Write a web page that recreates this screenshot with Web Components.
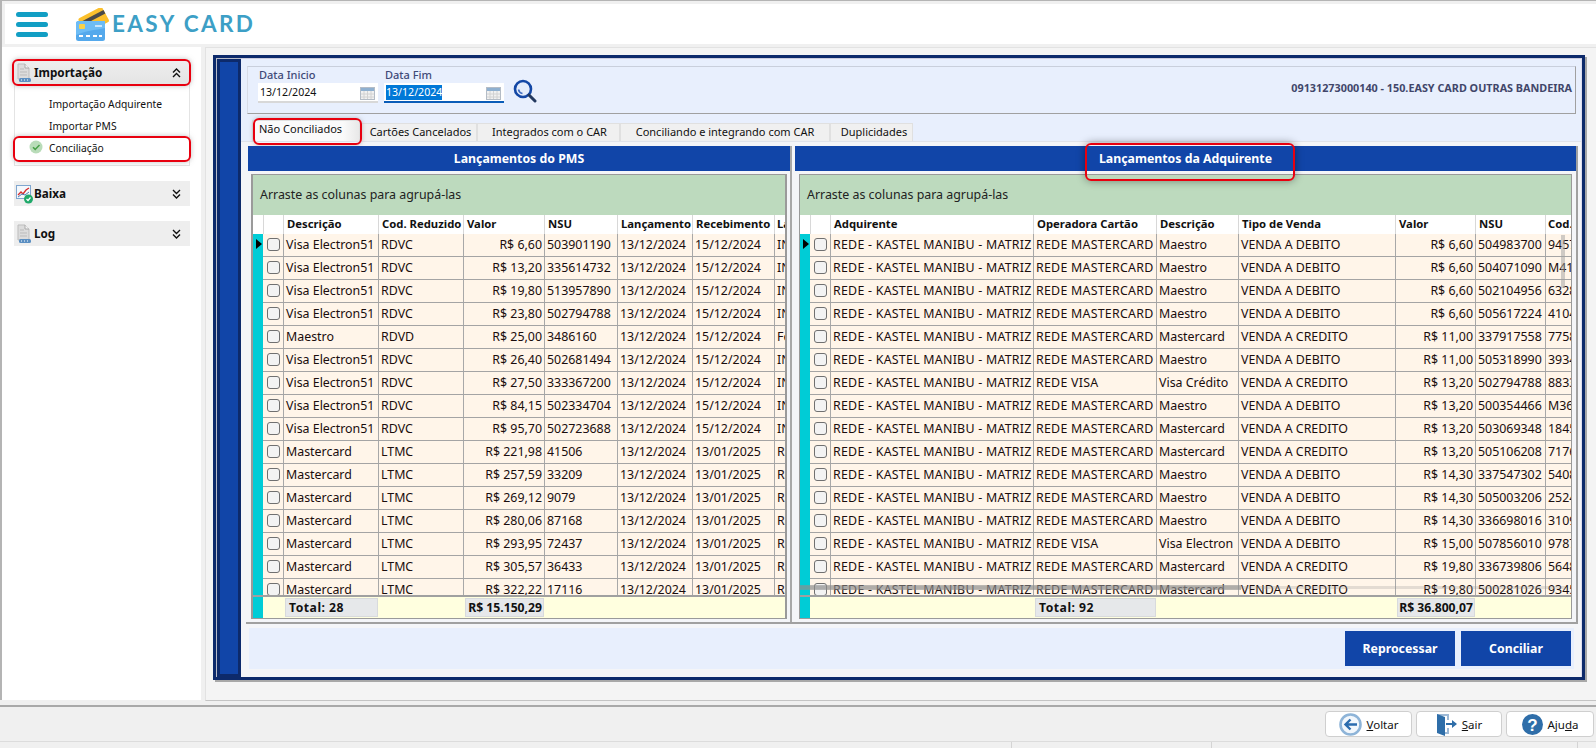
<!DOCTYPE html>
<html lang="pt-BR"><head><meta charset="utf-8"><title>Easy Card</title>
<style>
html,body{margin:0;padding:0;background:#f0f0f0}
body{width:1596px;height:748px;overflow:hidden;font:12px "Noto Sans","Open Sans",sans-serif;color:#111}
</style></head><body>
<app-shell></app-shell>
<script>
const FONT='"Noto Sans","Open Sans",sans-serif';
const ICON={
doc:`<svg width="16" height="20" viewBox="0 0 16 20"><path d="M2 1h7l4 4v11H2z" fill="#dcdcdc" stroke="#bdbdbd"/><path d="M9 1v4h4" fill="#f4f4f4" stroke="#aaa"/><path d="M4 6h4M4 9h7M4 12h7" stroke="#bbb"/><rect x="3" y="15" width="12" height="4" rx="1.5" fill="#5b8fc2"/><path d="M5 17h1M8 17h1M11 17h1" stroke="#fff"/></svg>`,
chart:`<svg width="17" height="20" viewBox="0 0 17 20"><rect x=".5" y="1.500" width="14" height="13" fill="#f4f8fc" stroke="#7fa6cf"/><path d="M2 11l3-3 2 2 3-4 3-2" fill="none" stroke="#d62b2b" stroke-width="1.300"/><path d="M2 13l4-3 3 1 4-3" fill="none" stroke="#4b7fb8"/><circle cx="12.500" cy="15" r="4.500" fill="#1fa96a"/><path d="M10.500 15l1.500 1.500 2.500-3" fill="none" stroke="#fff" stroke-width="1.200"/></svg>`,
up:`<svg width="9" height="10" viewBox="0 0 9 10"><path d="M1 4.500l3.500-3.500 3.500 3.500M1 9l3.500-3.500L8 9" fill="none" stroke="#111" stroke-width="1.400"/></svg>`,
down:`<svg width="9" height="10" viewBox="0 0 9 10"><path d="M1 1l3.500 3.500L8 1M1 5.500L4.500 9 8 5.500" fill="none" stroke="#111" stroke-width="1.400"/></svg>`,
check:`<svg width="14" height="14" viewBox="0 0 14 14"><circle cx="7" cy="7" r="6.500" fill="#b9dcb9"/><path d="M4 7.200l2.200 2.200L10.500 5" fill="none" stroke="#47a047" stroke-width="1.500"/></svg>`,
cal:`<svg width="15" height="14" viewBox="0 0 15 14"><rect x=".5" y="1.500" width="14" height="12" fill="#f1f1f1" stroke="#b4bcc6"/><rect x="1" y="2" width="13" height="3" fill="#8fb0d0"/><path d="M1 8h13M1 11h13M4 5v8M7.500 5v8M11 5v8" stroke="#d2d2d2"/></svg>`,
search:`<svg width="24" height="24" viewBox="0 0 24 24"><circle cx="10" cy="10" r="8" fill="#e4ecfb" stroke="#1347a5" stroke-width="2.600"/><path d="M5.500 10.500a5 5 0 0 0 4 4" fill="none" stroke="#3f6cc0" stroke-width="1.500"/><path d="M16 16l6 6" stroke="#23395f" stroke-width="3" stroke-linecap="round"/></svg>`,
back:`<svg width="23" height="23" viewBox="0 0 23 23"><circle cx="11.500" cy="11.500" r="10" fill="#f2f7fc" stroke="#8eb4d8" stroke-width="2.600"/><path d="M18 11.500H7M11.500 6.500l-5 5 5 5" fill="none" stroke="#2b6cae" stroke-width="2.400"/></svg>`,
exit:`<svg width="21" height="24" viewBox="0 0 21 24"><path d="M1 2h12v6h-2V4H6v16h5v-4h2v6H7z" fill="#9db9d6"/><path d="M1 2l8 3v19l-8-3z" fill="#2f6ea9"/><path d="M10 11h6V8l5 4-5 4v-3h-6z" fill="#2f6ea9"/></svg>`,
help:`<svg width="21" height="21" viewBox="0 0 21 21"><circle cx="10.500" cy="10.500" r="10.500" fill="#2f6ea9"/><text x="10.500" y="16.500" text-anchor="middle" font-family="Liberation Sans" font-weight="700" font-size="17" fill="#fff">?</text></svg>`,
card:`<svg width="34" height="33" viewBox="0 0 34 33"><g transform="rotate(-28 18 12)"><rect x="5" y="4" width="27" height="17" rx="2" fill="#fbc02d"/><rect x="5" y="8" width="27" height="4" fill="#4a4a4a"/></g><rect x="1" y="13" width="29" height="20" rx="2.500" fill="#55a9ec"/><path d="M1 15.500a2.500 2.500 0 0 1 2.500-2.500H30v7C20 22 10 23 1 27z" fill="#6dbcf5"/><rect x="4" y="16" width="6" height="5" rx="1" fill="#f8d24a"/><path d="M20 18h7" stroke="#e8f5ff" stroke-width="1.500"/><path d="M4 28h4M11 28h4M18 28h4M24 28h3" stroke="#fff" stroke-width="2"/></svg>`
};

class TopBar extends HTMLElement{constructor(){super();this.attachShadow({mode:'open'}).innerHTML=`<style>
:host{display:block;height:47px;box-sizing:border-box;border-top:1px solid #b4b4b4;border-left:2px solid #b4b4b4;padding:3px 0 3px 3px;background:#f0f0f0}
.w{height:40px;background:#fff;display:flex;align-items:center;box-sizing:border-box;padding-left:11px}
.b{display:flex;flex-direction:column;gap:5px;width:32px;margin-right:27px}
.b i{display:block;height:5px;border-radius:3px;background:#129ec4}
.t{font:700 22.500px/1 Lato,sans-serif;color:#3d9fc6;letter-spacing:2.400px;margin-left:3px;white-space:pre}
svg{display:block}
</style><div class="w"><div class="b"><i></i><i></i><i></i></div>${ICON.card}<span class="t">EASY CARD</span></div>`}}
customElements.define('top-bar',TopBar);

class MenuGroup extends HTMLElement{constructor(){super();this.attachShadow({mode:'open'})}
connectedCallback(){const open=this.hasAttribute('open'),mark=this.hasAttribute('mark');
this.shadowRoot.innerHTML=`<style>
:host{display:block;font-family:${FONT}}
.h{height:25px;background:#eeeeee;display:flex;align-items:center;padding:0 9px 0 2px;font:700 11.700px ${FONT};color:#111;position:relative;width:176px;box-sizing:border-box}
.h .ic{width:18px;display:flex}
.h span{flex:1;margin-top:-1px}
.h.mark{background:linear-gradient(#eee,#e4e4e4)}
.h.mark::after{content:"";position:absolute;left:-2px;right:-1px;top:-1px;bottom:-1px;border:2px solid #e8000f;border-radius:6px;box-shadow:0 0 5px #8888}
.c{border:1px solid #e4e4e4;border-top:0;width:176px;box-sizing:border-box;height:81px;padding-top:8px}
svg{display:block}
</style><div class="h ${mark?'mark':''}"><div class="ic">${ICON[this.getAttribute('icon')]}</div><span>${this.getAttribute('label')}</span>${open?ICON.up:ICON.down}</div>${open?'<div class="c"><slot></slot></div>':''}`}}
customElements.define('menu-group',MenuGroup);

class MenuItem extends HTMLElement{constructor(){super();this.attachShadow({mode:'open'})}
connectedCallback(){const a=this.hasAttribute('active');
this.shadowRoot.innerHTML=`<style>
:host{display:block;height:22px}
.r{height:22px;display:flex;align-items:center;position:relative;font:10.300px ${FONT};color:#111;padding-left:34px;box-sizing:border-box}
.i{position:absolute;left:14px;top:3px}
.a::after{content:"";position:absolute;left:-2px;right:-2px;top:-1px;height:22px;border:2px solid #e8000f;border-radius:6px;box-shadow:0 0 5px #8888}
svg{display:block}
</style><div class="r ${a?'a':''}">${a?`<span class="i">${ICON.check}</span>`:''}<slot></slot></div>`}}
customElements.define('menu-item',MenuItem);

class SideMenu extends HTMLElement{constructor(){super();this.attachShadow({mode:'open'}).innerHTML=`<style>
:host{display:flex;flex-direction:column;gap:15px;width:201px;box-sizing:border-box;background:#fff;border-left:2px solid #b4b4b4;padding:13px 0 0 12px;margin-bottom:5px}
</style><slot></slot>`}}
customElements.define('side-menu',SideMenu);

class DateField extends HTMLElement{constructor(){super();this.attachShadow({mode:'open'})}
connectedCallback(){const s=this.hasAttribute('selected');
this.shadowRoot.innerHTML=`<style>
:host{display:flex;flex-direction:column;width:120px;font-family:${FONT}}
label{font:500 11px/15px ${FONT};color:#3f4a78;padding-left:1px;height:16px}
.f{height:20px;box-sizing:border-box;background:#fff;display:flex;align-items:center;justify-content:space-between;padding:1px 3px 0 2px;font:10.600px ${FONT};border-bottom:2px solid ${s?'#0a5cb8':'#d8d8d8'}}
.f span{${s?'background:#0078d7;color:#fff;':''}line-height:15px}
svg{display:block}
</style><label>${this.getAttribute('label')}</label><div class="f"><span>${this.getAttribute('value')}</span>${ICON.cal}</div>`}}
customElements.define('date-field',DateField);

class FilterBar extends HTMLElement{constructor(){super();this.attachShadow({mode:'open'}).innerHTML=`<style>
:host{display:block;background:#e8effd;padding:7px 5px 8px 6px}
.b{height:48px;box-sizing:border-box;display:flex;align-items:flex-start;gap:6px;padding:0 3px 0 10px;border:1px solid #d8dce6;border-bottom-color:#a0a0a0;border-right-color:#a0a0a0;border-top-color:#c9cfdc;background:#e8effd}
.s{margin:12px 0 0 3px}
.n{margin-left:auto;font:700 10.800px/41px ${FONT};color:#41466a}
svg{display:block}
</style><div class="b"><date-field label="Data Inicio" value="13/12/2024"></date-field><date-field label="Data Fim" value="13/12/2024" selected></date-field><div class="s">${ICON.search}</div><div class="n">09131273000140 - 150.EASY CARD OUTRAS BANDEIRA</div></div>`}}
customElements.define('filter-bar',FilterBar);

class TabStrip extends HTMLElement{constructor(){super();this.attachShadow({mode:'open'});}
connectedCallback(){const t=[['Não Conciliados',108,1,0],['Cartões Cancelados',116,0,3],['Integrados com o CAR',143,0,2],['Conciliando e integrando com CAR',210,0,0],['Duplicidades',83,0,5]];
this.shadowRoot.innerHTML=`<style>
:host{display:flex;height:19px;background:#e8effd;padding-left:12px;align-items:flex-end;font:11px ${FONT};color:#111;border-bottom:1px solid #e0e3ea}
div{height:18px;box-sizing:border-box;background:#f0f0f0;border:1px solid #e0e0e0;border-bottom:0;text-align:center;line-height:15px;white-space:nowrap;flex:none}
.a{position:relative;height:21px;line-height:15px;text-align:left;padding-left:6px!important;margin-right:1px;margin-left:-1px;background:linear-gradient(90deg,#fafafa 85%,#e8e8e8)}
.a::after{content:"";position:absolute;left:0;right:-3px;top:-3px;bottom:-4px;border:2px solid #e8000f;border-radius:6px;box-shadow:0 0 4px #8888}
</style>`+t.map(x=>`<div class="${x[2]?'a':''}" style="width:${x[1]}px;padding-left:${x[3]}px">${x[0]}</div>`).join('')}}
customElements.define('tab-strip',TabStrip);

class DataGrid extends HTMLElement{constructor(){super();this.attachShadow({mode:'open'})}
set config(c){const tpl=c.cols.join('px ')+'px';const wide=c.wide||[];const n=c.cols.length-3;
const row=(cells,i)=>`<div class="r">
<div class="ind">${i===0?'<b></b>':''}</div><div class="cc"><i></i></div>${cells.map((t,k)=>`<div class="c ${c.right===k?'rt':''} ${wide.includes(k)?'w':''} ${k===n?'l':''}">${t}</div>`).join('')}</div>`;
const foot=c.cols.slice(2).map((w,k)=>{const v=c.foot[k];return `<div class="fc">${v?`<span class="${c.right===k?'rt':''}">${v}</span>`:''}</div>`}).join('');
this.shadowRoot.innerHTML=`<style>
:host{display:flex;flex-direction:column;flex:1;min-height:0;border:2px solid #9a9a9a;border-bottom-width:1px;border-top-width:1px;margin:3px;font-family:${FONT};background:#fff5e9;overflow:hidden}
.g{height:40px;flex:none;background:#bddabe;display:flex;align-items:center;padding:0 0 1px 7px;box-sizing:border-box;font:12.400px ${FONT};color:#222}
.h,.r,.f{display:grid;grid-template-columns:${tpl};flex:none}
.h{height:19px;background:#fff;font:700 11.300px/18px ${FONT};color:#111}
.h>div{border-right:1px solid #d8d8d8;padding-left:3px;white-space:nowrap;overflow:hidden}
.h>div:nth-child(-n+2){padding:0}
.h>div:last-child{border:0;padding-left:2px}
.b{flex:1;min-height:0;overflow:hidden;position:relative}
.r{height:23px;box-sizing:border-box;border-bottom:1px solid #a4a4a4;font:12.400px/22px ${FONT};color:#1a0d0d}
.c{border-right:1px solid #a8a8a8;padding-left:2px;white-space:nowrap;overflow:hidden}
.c.l{border-right:0}
.c.w{letter-spacing:.25px}
.c.rt{text-align:right;padding:0 2px 0 0}
.ind{background:#00ccd6;margin-right:1px;position:relative;margin-bottom:-1px}
.ind b{position:absolute;left:3px;top:5px;border-left:6px solid #000;border-top:5px solid transparent;border-bottom:5px solid transparent}
.cc{border-right:1px solid #a8a8a8;display:flex;align-items:center;justify-content:center}
.cc i{display:block;width:13px;height:13px;box-sizing:border-box;border:1px solid #707070;border-radius:3px;background:#f3f3f3;margin-top:-1px}
.f{height:23px;box-sizing:border-box;border-top:2px solid #a0a0a0;background:#ffffdf}
.f .ind{margin-bottom:0}
.fc{padding:1px 0;overflow:hidden;white-space:nowrap}
.fc span{display:block;height:19px;background:#e6e8ea;border:1px solid #d8dadc;box-sizing:border-box;padding-left:3px;margin:0 1px;font:700 12.200px/17px ${FONT};letter-spacing:.5px}
.fc span.rt{text-align:right;padding:0 1px 0 0;letter-spacing:0}
.vs,.hs{position:absolute;background:#a0a0a080;display:${c.scroll?'block':'none'}}
.vs{right:6px;top:1px;width:4px;height:53px}
.hs{left:0;bottom:5px;height:5px;width:441px;background:#8e8e8e99}
.hs2{left:0;right:6px;bottom:6px;height:3px;background:#8e8e8e40;width:auto}
</style><div class="g">Arraste as colunas para agrupá-las</div>
<div class="h">${['',''].concat(c.head).map(t=>`<div>${t}</div>`).join('')}</div>
<div class="b">${c.rows.map(row).join('')}<div class="vs"></div><div class="hs hs2"></div><div class="hs"></div></div>
<div class="f"><div class="ind"></div><div></div>${foot}</div>`}}
customElements.define('data-grid',DataGrid);

class GridPanel extends HTMLElement{constructor(){super();this.attachShadow({mode:'open'})}
connectedCallback(){const m=this.hasAttribute('mark');
this.shadowRoot.innerHTML=`<style>
:host{display:flex;flex-direction:column;min-width:0;min-height:0;position:relative}
.t{height:25px;flex:none;background:#1145a8;color:#fff;font:700 12.300px/25px ${FONT};text-align:center;position:relative}
.t u{text-decoration:none;position:relative;display:inline-block}
.m u::after{content:"";position:absolute;left:-14px;right:-23px;top:-3px;height:34px;border:2px solid #e8000f;border-radius:6px;box-shadow:0 0 8px #0006}
</style><div class="t ${m?'m':''}"><u>${this.getAttribute('title')}</u></div><slot></slot>`}}
customElements.define('grid-panel',GridPanel);

class ActionBar extends HTMLElement{constructor(){super();this.attachShadow({mode:'open'}).innerHTML=`<style>
:host{display:flex;justify-content:flex-end;gap:6px;height:41px;box-sizing:border-box;background:#e8effd;margin:4px 7px 8px 6px;padding:3px 3px 3px 0;flex:none}
::slotted(button){width:110px;height:35px;background:#1145a8;color:#fff;border:0;font:700 12.300px ${FONT};padding:0}
</style><slot></slot>`}}
customElements.define('action-bar',ActionBar);

class FootBtn extends HTMLElement{constructor(){super();this.attachShadow({mode:'open'})}
connectedCallback(){this.shadowRoot.innerHTML=`<style>
:host{display:flex;align-items:center;justify-content:center;gap:5px;height:26px;box-sizing:border-box;background:#fff;border:1px solid #cfcfcf;border-radius:4px;font:11.500px ${FONT};color:#111;overflow:hidden}
svg{display:block}
</style>${ICON[this.getAttribute('icon')]}<span><slot></slot></span>`}}
customElements.define('foot-btn',FootBtn);

class AppShell extends HTMLElement{constructor(){super();
const L=[['Visa Electron51','RDVC','R$ 6,60','503901190','15/12/2024','IN'],['Visa Electron51','RDVC','R$ 13,20','335614732','15/12/2024','IN'],['Visa Electron51','RDVC','R$ 19,80','513957890','15/12/2024','IN'],['Visa Electron51','RDVC','R$ 23,80','502794788','15/12/2024','IN'],['Maestro','RDVD','R$ 25,00','3486160','15/12/2024','Fe'],['Visa Electron51','RDVC','R$ 26,40','502681494','15/12/2024','IN'],['Visa Electron51','RDVC','R$ 27,50','333367200','15/12/2024','IN'],['Visa Electron51','RDVC','R$ 84,15','502334704','15/12/2024','IN'],['Visa Electron51','RDVC','R$ 95,70','502723688','15/12/2024','IN'],['Mastercard','LTMC','R$ 221,98','41506','13/01/2025','Ra'],['Mastercard','LTMC','R$ 257,59','33209','13/01/2025','Ra'],['Mastercard','LTMC','R$ 269,12','9079','13/01/2025','Ra'],['Mastercard','LTMC','R$ 280,06','87168','13/01/2025','Ra'],['Mastercard','LTMC','R$ 293,95','72437','13/01/2025','Ra'],['Mastercard','LTMC','R$ 305,57','36433','13/01/2025','Ra'],['Mastercard','LTMC','R$ 322,22','17116','13/01/2025','Ra']].map(r=>[r[0],r[1],r[2],r[3],'13/12/2024',r[4],r[5]]);
const MM='REDE MASTERCARD',D='VENDA A DEBITO',C='VENDA A CREDITO';
const R=[[MM,'Maestro',D,'R$ 6,60','504983700','9457'],[MM,'Maestro',D,'R$ 6,60','504071090','M41'],[MM,'Maestro',D,'R$ 6,60','502104956','6328'],[MM,'Maestro',D,'R$ 6,60','505617224','4104'],[MM,'Mastercard',C,'R$ 11,00','337917558','7758'],[MM,'Maestro',D,'R$ 11,00','505318990','3934'],['REDE VISA','Visa Crédito',C,'R$ 13,20','502794788','8833'],[MM,'Maestro',D,'R$ 13,20','500354466','M36'],[MM,'Mastercard',C,'R$ 13,20','503069348','1845'],[MM,'Mastercard',C,'R$ 13,20','505106208','7176'],[MM,'Maestro',D,'R$ 14,30','337547302','5408'],[MM,'Maestro',D,'R$ 14,30','505003206','2524'],[MM,'Maestro',D,'R$ 14,30','336698016','3109'],['REDE VISA','Visa Electron',D,'R$ 15,00','507856010','9787'],[MM,'Mastercard',C,'R$ 19,80','336739806','5648'],[MM,'Mastercard',C,'R$ 19,80','500281026','9345']].map(r=>['REDE - KASTEL MANIBU - MATRIZ',...r]);
const s=this.attachShadow({mode:'open'});
s.innerHTML=`<style>
:host{display:flex;flex-direction:column;width:1596px;height:748px;font-family:${FONT}}
.mid{display:flex;height:658px;flex:none}
.main{flex:1;margin:0 0 4px 4px;background:#f4f4f4;border:1px solid #e2e2e2;border-right:0;border-bottom:1px solid #c4c4c4;box-sizing:border-box;padding:7px 11px 0 7px;min-width:0}
.frame{height:625px;box-sizing:border-box;border:3px solid #0d2a6b;box-shadow:2px 2px 0 #a8a8a8;display:flex}
.bar{flex:none;width:25px;box-sizing:border-box;background:#0d2a6b;border-left:1px solid #b8bcc8;border-top:1px solid #b8bcc8;padding:3px;display:flex}
.bar i{flex:1;background:#1145a8}
.cnt{flex:1;min-width:0;display:flex;flex-direction:column;background:#f4f5f8;border-top:1px solid #ccd;border-right:1px solid #dde}
.page{flex:1;min-height:0;display:flex;flex-direction:column;margin-left:2px}
.split{height:478px;box-sizing:border-box;flex:none;margin:4px 3px 0 3px;display:grid;grid-template-columns:544px 5px 1fr;grid-template-rows:minmax(0,1fr);border-bottom:2px solid #a0a0a0;border-right:2px solid #a0a0a0}
.split .sp{background:linear-gradient(90deg,#a8a8a8 2px,transparent 2px)}
.split grid-panel:first-child{margin-left:2px}
.foot{flex:1;display:flex;flex-direction:column;border-top:2px solid #a9a9a9;background:#f0f0f0}
.btns{height:35px;box-sizing:border-box;flex:none;display:flex;justify-content:flex-end;gap:4px;padding:4px 2px 0 0;border-bottom:1px solid #dcdcdc}
.st{flex:1;display:grid;grid-template-columns:1012px 200px 366px 1fr}
.st i{border-right:1px solid #d4d4d4}
.st i:last-child{border:0}
</style>
<top-bar></top-bar>
<div class="mid">
<side-menu>
<menu-group icon="doc" label="Importação" open mark>
<menu-item>Importação Adquirente</menu-item><menu-item>Importar PMS</menu-item><menu-item active>Conciliação</menu-item>
</menu-group>
<menu-group icon="chart" label="Baixa"></menu-group>
<menu-group icon="doc" label="Log"></menu-group>
</side-menu>
<div class="main"><div class="frame"><div class="bar"><i></i></div><div class="cnt">
<filter-bar></filter-bar><tab-strip></tab-strip>
<div class="page"><div class="split">
<grid-panel title="Lançamentos do PMS"><data-grid id="l"></data-grid></grid-panel><div class="sp"></div>
<grid-panel title="Lançamentos da Adquirente" mark><data-grid id="r" style="margin:3px 4px;border-left-width:1px;border-right-width:1px"></data-grid></grid-panel>
</div>
<action-bar><button>Reprocessar</button><button>Conciliar</button></action-bar>
</div></div></div></div></div>
<div class="foot"><div class="btns"><foot-btn icon="back" style="width:87px"><u>V</u>oltar</foot-btn><foot-btn icon="exit" style="width:86px"><u>S</u>air</foot-btn><foot-btn icon="help" style="width:88px">Aju<u>d</u>a</foot-btn></div><div class="st"><i></i><i></i><i></i><i></i></div></div>`;
s.getElementById('l').config={cols:[11,20,95,85,81,73,75,82,10],head:['Descrição','Cod. Reduzido','Valor','NSU','Lançamento','Recebimento','La'],rows:L,right:2,foot:['Total: 28','','R$ 15.150,29','','','','']};
s.getElementById('r').config={cols:[11,20,203,123,82,157,80,70,25],head:['Adquirente','Operadora Cartão','Descrição','Tipo de Venda','Valor','NSU','Cod.'],rows:R,right:4,scroll:true,wide:[0,1],foot:['','Total: 92','','','R$ 36.800,07','','']};
}}
customElements.define('app-shell',AppShell);
</script></body></html>
